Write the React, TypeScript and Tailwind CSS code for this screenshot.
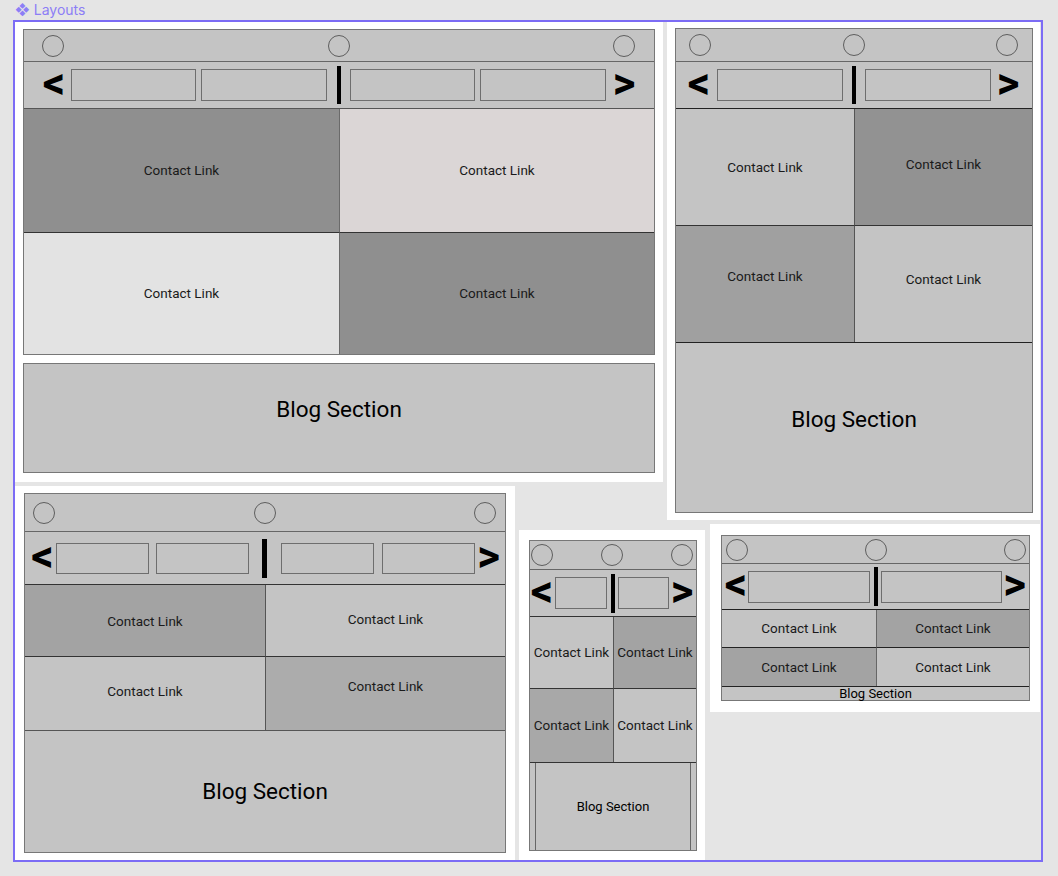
import React from "react";

// small building blocks of the wireframes
function Circle() {
  return <div className="w-[22px] h-[22px] rounded-full border border-[#5e5e5e]" />;
}

function Arrow({ dir, className }: { dir: "<" | ">"; className: string }) {
  return (
    <div className={`flex items-center justify-center font-bold text-[44px] leading-none text-black ${className}`}>
      <span className="-mt-[5px]">{dir}</span>
    </div>
  );
}

function Box({ className }: { className: string }) {
  return <div className={`border border-[#6e6e6e] bg-[#c4c4c4] ${className}`} />;
}

function Bar({ className }: { className: string }) {
  return <div className={`bg-black ${className}`} />;
}

function Cell({ className, text = "Contact Link" }: { className: string; text?: string }) {
  return (
    <div className={`flex items-center justify-center text-[13.5px] text-[#1a1a1a] ${className}`}>{text}</div>
  );
}

export default function App() {
  return (
    <div className="relative w-[1058px] h-[876px] overflow-hidden bg-[#e5e5e5] font-['Roboto',sans-serif]">
      {/* frame label */}
      <div className="absolute left-[15px] top-0 h-[20px] flex items-center gap-[4px] text-[14px] leading-none text-[#8c7ef6] font-['Inter',sans-serif]">
        <span className="text-[14px] leading-none">❖</span>
        <span>Layouts</span>
      </div>
      <div className="absolute left-[13px] top-[20px] w-[1030px] h-[842px] border-2 border-[#7c6cf5]" />

      {/* Desktop wide */}
      <div className="absolute left-[15px] top-[22px] w-[648px] h-[460px] bg-white pl-[8px] pt-[7px] flex flex-col gap-[8px]">
        <div className="w-[632px] border border-[#777] flex flex-col">
          <div className="h-[32px] bg-[#c4c4c4] border-b border-[#666] flex items-center justify-between pl-[18px] pr-[19px]">
            <Circle />
            <Circle />
            <Circle />
          </div>
          <div className="h-[47px] bg-[#c4c4c4] border-b border-[#555] flex items-center pl-[20px]">
            <Arrow dir="<" className="w-[20px]" />
            <Box className="ml-[7px] w-[125px] h-[32px]" />
            <Box className="ml-[5px] w-[126px] h-[32px]" />
            <Bar className="ml-[10px] w-[4px] h-[38px]" />
            <Box className="ml-[9px] w-[125px] h-[32px]" />
            <Box className="ml-[5px] w-[126px] h-[32px]" />
            <Arrow dir=">" className="ml-[8px] w-[20px]" />
          </div>
          <div className="grid grid-cols-[316px_1fr] grid-rows-[124px_121px]">
            <Cell className="bg-[#8f8f8f] border-b border-[#333] border-r border-r-[#6a6a6a]" />
            <Cell className="bg-[#dbd6d6] border-b border-[#333]" />
            <Cell className="bg-[#e3e3e3] border-r border-[#6a6a6a]" />
            <Cell className="bg-[#8f8f8f]" />
          </div>
        </div>
        <div className="w-[632px] h-[110px] bg-[#c4c4c4] border border-[#777] flex items-center justify-center pb-[16px] text-[22.5px] text-black">
          Blog Section
        </div>
      </div>

      {/* Tablet */}
      <div className="absolute left-[667px] top-[22px] w-[373px] h-[498px] bg-white pl-[8px] pt-[6px]">
        <div className="w-[358px] h-[485px] border border-[#777] flex flex-col">
          <div className="h-[33px] bg-[#c4c4c4] border-b border-[#666] flex items-center justify-between pl-[13px] pr-[14px]">
            <Circle />
            <Circle />
            <Circle />
          </div>
          <div className="h-[47px] bg-[#c4c4c4] border-b border-[#222] flex items-center pl-[13px]">
            <Arrow dir="<" className="w-[20px]" />
            <Box className="ml-[8px] w-[126px] h-[32px]" />
            <Bar className="ml-[9px] w-[4px] h-[38px]" />
            <Box className="ml-[9px] w-[126px] h-[32px]" />
            <Arrow dir=">" className="ml-[7px] w-[20px]" />
          </div>
          <div className="grid grid-cols-[179px_1fr] grid-rows-[117px_116px] border-b border-[#222]">
            <Cell className="bg-[#c4c4c4] border-b border-[#333] border-r border-r-[#555]" />
            <Cell className="bg-[#929292] border-b border-[#333] pb-[6px]" />
            <Cell className="bg-[#a0a0a0] border-r border-[#555] pb-[16px]" />
            <Cell className="bg-[#c4c4c4] pb-[10px]" />
          </div>
          <div className="flex-1 bg-[#c4c4c4] flex items-center justify-center pb-[16px] text-[22.5px] text-black">
            Blog Section
          </div>
        </div>
      </div>

      {/* Laptop */}
      <div className="absolute left-[15px] top-[486px] w-[500px] h-[374px] bg-white pl-[9px] pt-[7px]">
        <div className="w-[482px] h-[360px] border border-[#777] flex flex-col">
          <div className="h-[38px] bg-[#c4c4c4] border-b border-[#666] flex items-center justify-between pl-[8px] pr-[9px]">
            <Circle />
            <Circle />
            <Circle />
          </div>
          <div className="h-[53px] bg-[#c4c4c4] border-b border-[#333] flex items-center pl-[8px]">
            <Arrow dir="<" className="w-[19px]" />
            <Box className="ml-[4px] w-[93px] h-[31px]" />
            <Box className="ml-[7px] w-[93px] h-[31px]" />
            <Bar className="ml-[13px] w-[5px] h-[39px]" />
            <Box className="ml-[14px] w-[93px] h-[31px]" />
            <Box className="ml-[8px] w-[93px] h-[31px]" />
            <Arrow dir=">" className="ml-[4px] w-[19px]" />
          </div>
          <div className="grid grid-cols-[241px_1fr] grid-rows-[72px_73px] border-b border-[#555]">
            <Cell className="bg-[#a3a3a3] border-b border-[#333] border-r border-r-[#555] pt-[2px]" />
            <Cell className="bg-[#c4c4c4] border-b border-[#333] pb-[3px]" />
            <Cell className="bg-[#c4c4c4] border-r border-[#555] pb-[4px]" />
            <Cell className="bg-[#acacac] pb-[14px]" />
          </div>
          <div className="flex-1 bg-[#c4c4c4] flex items-center justify-center text-[22.5px] text-black">Blog Section</div>
        </div>
      </div>

      {/* Phone */}
      <div className="absolute left-[519px] top-[530px] w-[186px] h-[330px] bg-white pl-[10px] pt-[10px]">
        <div className="w-[168px] h-[311px] border border-[#777] flex flex-col">
          <div className="h-[29px] bg-[#c4c4c4] border-b border-[#666] flex items-center justify-between pl-[1px] pr-[3px]">
            <Circle />
            <Circle />
            <Circle />
          </div>
          <div className="h-[47px] bg-[#c4c4c4] border-b border-[#333] flex items-center pl-[2px]">
            <Arrow dir="<" className="w-[20px]" />
            <Box className="ml-[3px] w-[52px] h-[32px]" />
            <Bar className="ml-[4px] w-[4px] h-[39px]" />
            <Box className="ml-[3px] w-[51px] h-[32px]" />
            <Arrow dir=">" className="ml-[3px] w-[20px]" />
          </div>
          <div className="grid grid-cols-[84px_1fr] grid-rows-[72px_73px] border-b border-[#333]">
            <Cell className="bg-[#c4c4c4] border-b border-[#333] border-r border-r-[#555]" />
            <Cell className="bg-[#a3a3a3] border-b border-[#333]" />
            <Cell className="bg-[#a8a8a8] border-r border-[#555]" />
            <Cell className="bg-[#c4c4c4]" />
          </div>
          <div className="flex-1 bg-[#c4c4c4] px-[5px]">
            <div className="h-full border-x border-[#666] flex items-center justify-center text-[13px] text-black">
              Blog Section
            </div>
          </div>
        </div>
      </div>

      {/* Landscape phone */}
      <div className="absolute left-[710px] top-[524px] w-[330px] h-[188px] bg-white pl-[11px] pt-[11px]">
        <div className="w-[309px] h-[166px] border border-[#777] flex flex-col">
          <div className="h-[29px] bg-[#c4c4c4] border-b border-[#666] flex items-center justify-between pl-[4px] pr-[3px]">
            <Circle />
            <Circle />
            <Circle />
          </div>
          <div className="h-[47px] bg-[#c4c4c4] border-b border-[#222] flex items-center pl-[4px]">
            <Arrow dir="<" className="w-[20px]" />
            <Box className="ml-[2px] w-[122px] h-[32px]" />
            <Bar className="ml-[4px] w-[4px] h-[39px]" />
            <Box className="ml-[3px] w-[121px] h-[32px]" />
            <Arrow dir=">" className="ml-[2px] w-[21px]" />
          </div>
          <div className="grid grid-cols-[155px_1fr] grid-rows-[38px_38px] border-b border-[#222]">
            <Cell className="bg-[#c4c4c4] border-b border-[#222] border-r border-r-[#666]" />
            <Cell className="bg-[#a3a3a3] border-b border-[#222]" />
            <Cell className="bg-[#a3a3a3] border-r border-[#666]" />
            <Cell className="bg-[#c4c4c4]" />
          </div>
          <div className="flex-1 bg-[#c4c4c4] flex items-center justify-center text-[13px] leading-none text-black">
            Blog Section
          </div>
        </div>
      </div>
    </div>
  );
}
